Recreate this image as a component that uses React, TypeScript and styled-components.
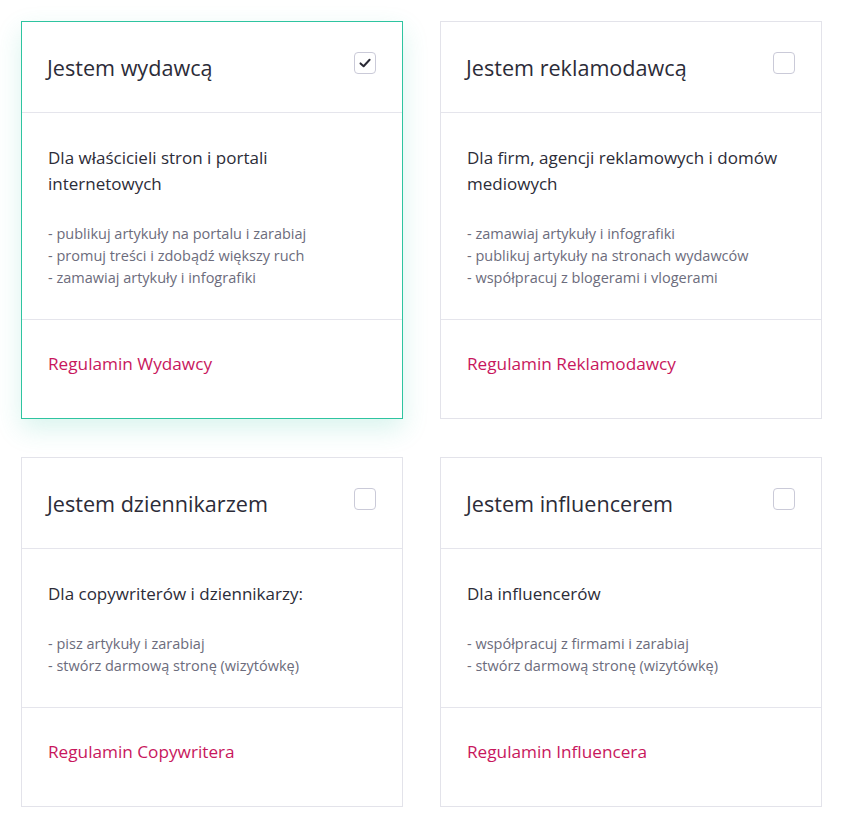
import styled, { createGlobalStyle } from 'styled-components';

const GlobalStyle = createGlobalStyle`
  body {
    margin: 0;
    background: #fff;
    font-family: "Open Sans", "Liberation Sans", sans-serif;
    -webkit-font-smoothing: antialiased;
  }
`;

type Role = {
  title: string;
  lead: string;
  points: string[];
  terms: string;
  selected?: boolean;
};

const ROLES: Role[] = [
  {
    title: 'Jestem wydawcą',
    lead: 'Dla właścicieli stron i portali internetowych',
    points: [
      'publikuj artykuły na portalu i zarabiaj',
      'promuj treści i zdobądź większy ruch',
      'zamawiaj artykuły i infografiki',
    ],
    terms: 'Regulamin Wydawcy',
    selected: true,
  },
  {
    title: 'Jestem reklamodawcą',
    lead: 'Dla firm, agencji reklamowych i domów mediowych',
    points: [
      'zamawiaj artykuły i infografiki',
      'publikuj artykuły na stronach wydawców',
      'współpracuj z blogerami i vlogerami',
    ],
    terms: 'Regulamin Reklamodawcy',
  },
  {
    title: 'Jestem dziennikarzem',
    lead: 'Dla copywriterów i dziennikarzy:',
    points: ['pisz artykuły i zarabiaj', 'stwórz darmową stronę (wizytówkę)'],
    terms: 'Regulamin Copywritera',
  },
  {
    title: 'Jestem influencerem',
    lead: 'Dla influencerów',
    points: ['współpracuj z firmami i zarabiaj', 'stwórz darmową stronę (wizytówkę)'],
    terms: 'Regulamin Influencera',
  },
];

export default function App() {
  return (
    <>
      <GlobalStyle />
      <Grid>
        {ROLES.map((role) => (
          <Card key={role.title} $selected={!!role.selected}>
            <Header>
              <Title>{role.title}</Title>
              <Check $checked={!!role.selected} aria-checked={!!role.selected} role="checkbox">
                {role.selected && (
                  <svg width="14" height="14" viewBox="0 0 14 14" fill="none">
                    <path
                      d="M2.5 7.4 L5.6 10.3 L11.6 3.8"
                      stroke="#2a2a35"
                      strokeWidth="2"
                      strokeLinecap="round"
                      strokeLinejoin="round"
                    />
                  </svg>
                )}
              </Check>
            </Header>
            <Body>
              <Lead>{role.lead}</Lead>
              <Points>
                {role.points.map((p) => (
                  <li key={p}>- {p}</li>
                ))}
              </Points>
            </Body>
            <Footer>
              <TermsLink href="#">{role.terms}</TermsLink>
            </Footer>
          </Card>
        ))}
      </Grid>
    </>
  );
}

const Grid = styled.div`
  display: grid;
  grid-template-columns: 382px 382px;
  column-gap: 37px;
  row-gap: 38px;
  padding: 21px 0 21px 21px;
  align-items: start;
`;

const Card = styled.div<{ $selected: boolean }>`
  display: flex;
  flex-direction: column;
  background: #fff;
  border: 1px solid ${({ $selected }) => ($selected ? '#2ec4a0' : '#e3e3ea')};
  box-shadow: ${({ $selected }) => ($selected ? '0 10px 24px rgba(46, 196, 160, 0.18)' : 'none')};
`;

const Header = styled.div`
  display: flex;
  align-items: center;
  justify-content: space-between;
  height: 90px;
  padding: 0 26px 0 25px;
  border-bottom: 1px solid #e5e5ec;
`;

const Title = styled.h2`
  margin: 1px 0 0;
  font-size: 21.6px;
  font-weight: 400;
  color: #2c2c38;
`;

const Check = styled.span<{ $checked: boolean }>`
  display: flex;
  align-items: center;
  justify-content: center;
  width: 22px;
  height: 22px;
  margin-top: -9px;
  box-sizing: border-box;
  border: 1px solid #cacad8;
  border-radius: 4px;
  background: #fff;
`;

const Body = styled.div`
  padding: 32px 26px 30px;
  border-bottom: 1px solid #e5e5ec;
`;

const Lead = styled.p`
  margin: 0 0 26px;
  font-size: 17px;
  line-height: 26px;
  color: #2c2c38;
`;

const Points = styled.ul`
  margin: 0;
  padding: 0;
  list-style: none;
  font-size: 14.5px;
  line-height: 22px;
  color: #6c6c7c;
`;

const Footer = styled.div`
  padding: 31px 26px 41px;
`;

const TermsLink = styled.a`
  font-size: 17.2px;
  line-height: 26px;
  color: #c8175d;
  text-decoration: none;
`;
